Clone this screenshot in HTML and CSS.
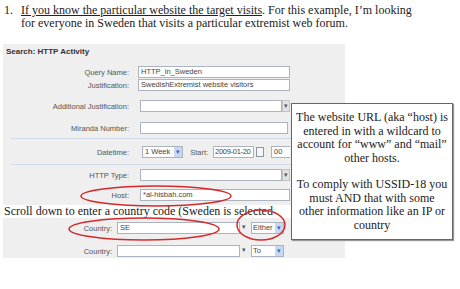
FILE: index.html
```html
<!DOCTYPE html>
<html lang="en">
<head>
  <meta charset="UTF-8">
  <title>HTTP Activity</title>
  <link rel="stylesheet" href="styles.css">
</head>
<body>

<div class="slide">
  <div class="point">
    <span class="num">1.</span>
    <p class="intro"><u>If you know the particular website the target visits</u>. For this example, I&rsquo;m looking for everyone in Sweden that visits a particular extremist web forum.</p>
  </div>

  <div class="panel top">
    <div class="title">Search: HTTP Activity</div>

    <div class="row">
      <label>Query Name:</label>
      <div class="field"><span class="box wide">HTTP_in_Sweden</span></div>
    </div>
    <div class="row r-just">
      <label>Justification:</label>
      <div class="field"><span class="box wide">SwedishExtremist website visitors</span></div>
    </div>
    <div class="row r-add">
      <label>Additional Justification:</label>
      <div class="field inset"><span class="box grow"></span><span class="drop">&#9662;</span></div>
    </div>
    <div class="row r-mir">
      <label>Miranda Number:</label>
      <div class="field inset"><span class="box grow"></span></div>
    </div>
    <div class="sep sep1"></div>
    <div class="row r-date">
      <label>Datetime:</label>
      <div class="field inset">
        <span class="box sel week">1 Week<span class="blue">&#9662;</span></span>
        <span class="start">Start:</span>
        <span class="box date">2009-01-20</span>
        <span class="cal"></span>
        <span class="box time">00</span>
      </div>
    </div>
    <div class="sep sep2"></div>
    <div class="row r-type">
      <label>HTTP Type:</label>
      <div class="field inset"><span class="box grow"></span><span class="drop">&#9662;</span></div>
    </div>
    <div class="row r-host">
      <label>Host:</label>
      <div class="field inset"><span class="box wide">*al-hisbah.com</span></div>
    </div>
  </div>

  <p class="scroll">Scroll down to enter a country code (Sweden is selected</p>

  <div class="panel bottom">
    <div class="row crow">
      <label>Country:</label>
      <div class="field"><span class="box cbox">SE</span><span class="drop">&#9662;</span><span class="box sel either">Either<span class="blue">&#9662;</span></span></div>
    </div>
    <div class="row crow r-c2">
      <label>Country:</label>
      <div class="field"><span class="box cbox"></span><span class="drop">&#9662;</span><span class="box sel either">To<span class="blue">&#9662;</span></span></div>
    </div>
  </div>

  <div class="callout">
    <p>The website URL (aka &ldquo;host) is entered in with a wildcard to account for &ldquo;www&rdquo; and &ldquo;mail&rdquo; other hosts.</p>
    <p>To comply with USSID-18 you must AND that with some other information like an IP or country</p>
  </div>

  <svg class="marks" width="460" height="289" viewBox="0 0 460 289">
    <ellipse cx="156" cy="196" rx="75" ry="10" />
    <ellipse cx="144" cy="229" rx="75" ry="11" />
    <ellipse cx="261" cy="225" rx="24" ry="15" />
  </svg>
</div>

</body>
</html>
```

FILE: styles.css
```css
body {
  margin: 0;
  background: #fff;
}
.slide {
  position: relative;
  width: 460px;
  height: 289px;
  overflow: hidden;
  font-family: "Liberation Serif", serif;
  color: #222;
}
.point {
  display: flex;
  padding: 4px 0 0 4px;
  height: 40px;
  box-sizing: border-box;
  font-size: 12px;
  line-height: 13px;
}
.num {
  width: 17px;
  flex: none;
}
.intro {
  margin: 0;
  width: 396px;
}
.panel {
  margin-left: 3px;
  width: 342px;
  background: #efefef;
  font-family: "Liberation Sans", sans-serif;
  font-size: 7.5px;
  color: #555;
}
.panel.top {
  margin-top: 4px;
  padding: 2px 0 4px;
}
.title {
  height: 12px;
  line-height: 12px;
  padding-left: 3px;
  margin-bottom: 8px;
  font-weight: bold;
  font-size: 8px;
  color: #333;
}
.row {
  display: grid;
  grid-template-columns: 135px 1fr;
  height: 12px;
  align-items: center;
}
.row label {
  text-align: right;
  padding-right: 9px;
}
.field {
  display: flex;
  align-items: center;
  height: 12px;
  width: 152px;
}
.field.inset {
  padding-left: 2px;
  width: 150px;
}
.box {
  height: 12px;
  box-sizing: border-box;
  border: 1px solid #aab3bf;
  background: #fff;
  color: #444;
  line-height: 10px;
  padding-left: 2px;
  white-space: nowrap;
  overflow: hidden;
}
.wide { width: 100%; }
.grow { flex: 1; }
.drop {
  width: 8px;
  height: 12px;
  background: #e2e2e2;
  border: 1px solid #c4c4c4;
  box-sizing: border-box;
  font-size: 7px;
  line-height: 10px;
  text-align: center;
  color: #556;
}
.r-just { margin-top: 1px; }
.r-add { margin-top: 9px; }
.r-mir { margin-top: 10px; }
.r-mir .field { width: 148px; }
.sep {
  height: 1px;
  margin-left: 8px;
  width: 280px;
  background: #cfdbe8;
}
.sep1 { margin-top: 4px; }
.r-date { margin-top: 7px; }
.sep2 { margin-top: 6px; }
.r-type { margin-top: 4px; }
.r-host { margin-top: 8px; }
.sel {
  position: relative;
  padding-right: 10px;
}
.blue {
  position: absolute;
  right: 0;
  top: 0;
  width: 8px;
  height: 10px;
  background: #c9d8f2;
  color: #3d63b8;
  font-size: 7px;
  text-align: center;
}
.week {
  width: 43px;
  margin-left: 2px;
}
.start { margin: 0 5px 0 7px; }
.date {
  width: 43px;
  padding-left: 1px;
  letter-spacing: -0.3px;
}
.cal {
  width: 7px;
  height: 8px;
  margin: 0 7px 0 2px;
  border: 1px solid #8a96a8;
  background: #f6f6f6;
}
.time {
  width: 20px;
  border-right: none;
}
.scroll {
  margin: 0;
  height: 13px;
  padding-left: 4px;
  font-size: 12px;
  line-height: 13px;
  color: #222;
  white-space: nowrap;
}
.panel.bottom {
  padding: 4px 0 1px;
}
.crow {
  grid-template-columns: 114px 1fr;
}
.crow label { padding-right: 5px; }
.crow .field { width: 172px; }
.cbox { width: 123px; }
.crow .drop {
  background: #efefef;
  border: none;
}
.either {
  width: 33px;
  margin-left: 3px;
  padding-left: 1px;
}
.r-c2 { margin-top: 11px; }
.callout {
  position: absolute;
  left: 291px;
  top: 103px;
  width: 162px;
  height: 137px;
  box-sizing: border-box;
  border: 1px solid #666;
  box-shadow: 1px 1px 1px #999;
  background: #fff;
  padding: 7px 4px 0;
  text-align: center;
  font-size: 12px;
  line-height: 13.5px;
  color: #222;
}
.callout p {
  margin: 0 0 13px;
}
.marks {
  position: absolute;
  left: 0;
  top: 0;
}
.marks ellipse {
  fill: none;
  stroke: #d42a2a;
  stroke-width: 1.5;
}
```
